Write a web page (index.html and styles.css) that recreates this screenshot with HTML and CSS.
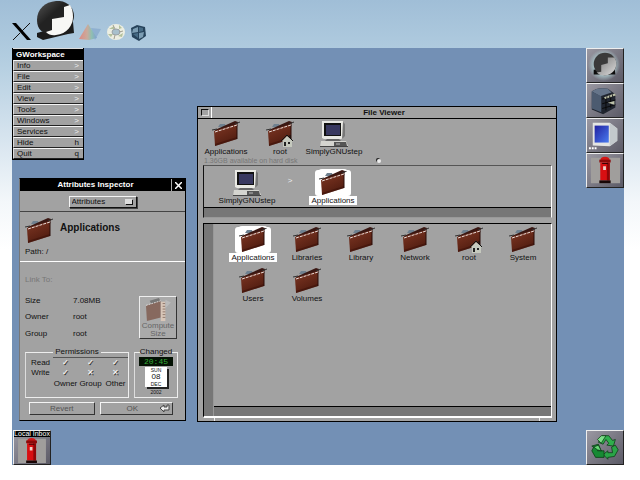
FILE: index.html
```
<!DOCTYPE html>
<html lang="en">
<head>
<meta charset="utf-8">
<title>GWorkspace</title>
<link rel="stylesheet" href="styles.css">
</head>
<body>
<svg class="defs" aria-hidden="true">
  <defs>
    <linearGradient id="leather" x1="0" y1="0" x2="0.5" y2="1"><stop offset="0" stop-color="#7d3c2a"/><stop offset=".5" stop-color="#692a1a"/><stop offset="1" stop-color="#4f1c10"/></linearGradient>
    <linearGradient id="ink" x1="0" y1="0" x2="1" y2="1"><stop offset="0" stop-color="#555"/><stop offset=".4" stop-color="#222"/><stop offset="1" stop-color="#222"/></linearGradient>
    <linearGradient id="glass" x1="0" y1="0" x2="1" y2="1"><stop offset="0" stop-color="#2020a0"/><stop offset="1" stop-color="#4a7cf0"/></linearGradient>
    <linearGradient id="silver" x1="0" y1="0" x2="1" y2="1"><stop offset="0" stop-color="#777"/><stop offset="1" stop-color="#ddd"/></linearGradient>
    <radialGradient id="glow"><stop offset=".6" stop-color="#a9c4c8"/><stop offset="1" stop-color="#a9c4c8" stop-opacity="0"/></radialGradient>
    <linearGradient id="prism" x1="0" y1="0" x2="1" y2="0"><stop offset="0" stop-color="#dc8a84"/><stop offset=".45" stop-color="#cbaa9b"/><stop offset=".7" stop-color="#8fbfb2"/><stop offset="1" stop-color="#7e9fd0"/></linearGradient>
  </defs>
  <symbol id="folder" viewBox="0 0 28 26">
    <path d="M6 6l2-3 5 0 1 3z" fill="#6f8190"/>
    <path d="M3 9L14 4l9-4 3 1-1 5L4 12z" fill="#3a1712"/>
    <path d="M2 10L25 3l0 15L3 25z" fill="url(#leather)"/>
    <path d="M3 25l22-7v-2L3 23z" fill="#3d120a" opacity=".6"/>
    <path d="M25 4v14" stroke="#2b0c08" fill="none"/>
    <path d="M0 9l5-1M23 3l5-2" stroke="#333"/>
    <path d="M3 11L25 4" stroke="#e9dcd8" stroke-dasharray="3 1" fill="none"/>
  </symbol>
  <symbol id="home" viewBox="0 0 28 26">
    <use href="#folder"/>
    <path d="M16 20l5-5 6 5-1 1v5h-9v-5z" fill="#c5c9be"/>
    <path d="M15 20l6-6 6 6M24 14v3" stroke="#111" fill="none"/>
    <path d="M18 21h2v4h-2zM22 21h2v2h-2z" fill="#222"/>
  </symbol>
  <symbol id="computer" viewBox="0 0 28 26">
    <path d="M2 0h21v17l-2 1H4l-2-1z" fill="#e9e9e4"/>
    <path d="M23 1l2 2v12l-3 3z" fill="#777"/>
    <path d="M4 2h17v13H4z" fill="#111"/><path d="M6 4h14v10H6z" fill="#393960"/>
    <path d="M7 18h12l2 2H5z" fill="#666"/>
    <path d="M1 20h25l2 5v1H0z" fill="#d5d5d0"/>
    <path d="M14 21h12l1 4H14z" fill="#555"/><path d="M16 23h4" stroke="#bbb"/>
    <path d="M0 25.500h28" stroke="#444"/>
  </symbol>
  <symbol id="postbox" viewBox="0 0 38 35">
    <path d="M4 4h31v27H4z" fill="#a09e9c"/>
    <path d="M14 7q0-4 5-4t5 4z" fill="#d31616"/>
    <path d="M13 6h12v3H13z" fill="#8b0909"/>
    <path d="M14 9h10v19H14z" fill="#d80f12"/><path d="M21 9h3v19h-3z" fill="#900608"/>
    <path d="M13 28h12v3H13z" fill="#180606"/>
    <path d="M16 10h6" stroke="#200"/><path d="M17 13h3v4h-3z" fill="#f0d0c8"/>
  </symbol>
</svg>

<header class="topbar">
  <svg class="x-logo" viewBox="0 0 20 18" role="img" aria-label="X"><path d="M0 0h4l15 17h-4z"/><path d="M18 0L10 8M8 10L1 17" stroke="#111" fill="none"/></svg>
  <svg class="step-logo" viewBox="0 0 38 40" role="img" aria-label="GNUstep">
    <path d="M0 32l7-2 29-9 1 11-6 1L6 39l-6-3z" fill="#1b1b1b"/>
    <path d="M0 19C0 8 8 1 19 0s18 7 18 15-9 20-20 19S0 29 0 19z" fill="url(#ink)"/>
    <path d="M33 4l-6 2v10l-12 2v11l-6 2q4 4 10 3c11-1 17-10 17-18 0-5-1-9-3-12z" fill="#f7f7f5"/>
  </svg>
  <svg class="app-a" viewBox="0 0 22 18" aria-hidden="true"><path d="M12 5l10 1-6 11z" fill="#8fb0d0"/><path d="M9 1l9 14-8 2-10-1z" fill="url(#prism)"/></svg>
  <svg class="app-b" viewBox="0 0 20 18" aria-hidden="true"><ellipse cx="10" cy="9" rx="9" ry="8" fill="#eceee2"/><path d="M3 6l5-3v3zM13 2l3 3-3 1zM2 11l5 0-2 3zM12 13l5-3-1 4z" fill="#b3c19c"/><ellipse cx="10" cy="9" rx="4" ry="3" fill="#a8c0cc" stroke="#9aa2a5"/><path d="M7 2l2 4M17 8l-4 1M8 16l1-4" stroke="#a09e90"/></svg>
  <svg class="app-c" viewBox="0 0 16 16" aria-hidden="true"><path d="M1 3l6-3 8 2 1 9-7 5-7-4z" fill="#27435b"/><path d="M3 4l5-2v5l-6 1zM9 8l5-1-1 5-4 2z" fill="#7c9db3"/><path d="M9 2l4 1v3l-4 1zM3 9l5-1v5z" fill="#476b85"/></svg>
</header>

<main class="desktop">
  <nav class="menu">
    <h1 class="menu-title">GWorkspace</h1>
    <button class="menu-item">Info<span class="key">&gt;</span></button>
    <button class="menu-item">File<span class="key">&gt;</span></button>
    <button class="menu-item">Edit<span class="key">&gt;</span></button>
    <button class="menu-item">View<span class="key">&gt;</span></button>
    <button class="menu-item">Tools<span class="key">&gt;</span></button>
    <button class="menu-item">Windows<span class="key">&gt;</span></button>
    <button class="menu-item">Services<span class="key">&gt;</span></button>
    <button class="menu-item">Hide<span class="key dark">h</span></button>
    <button class="menu-item">Quit<span class="key dark">q</span></button>
  </nav>

  <section class="inspector" aria-label="Attributes Inspector">
    <header class="inspector-title"><h2>Attributes Inspector</h2><button class="close" aria-label="Close"><svg viewBox="0 0 7 7"><path d="M0 0l7 7M7 0L0 7" stroke="#fff" stroke-width="1.500"/></svg></button></header>
    <div class="chooser">
      <select aria-label="Inspector"><option>Attributes</option></select>
      <i class="chooser-mark"></i>
    </div>
    <div class="subject">
      <svg class="icon"><use href="#folder"/></svg>
      <h3>Applications</h3>
      <p>Path: /</p>
    </div>
    <div class="details">
      <p class="faint">Link To:</p>
      <div class="facts-row">
        <dl class="facts">
          <dt>Size</dt><dd>7.08MB</dd>
          <dt>Owner</dt><dd>root</dd>
          <dt>Group</dt><dd>root</dd>
        </dl>
        <button class="compute"><svg viewBox="0 0 30 26" aria-hidden="true"><path d="M6 3l10-3 2 4-10 3z" fill="#777"/><path d="M2 8l16-5v18L3 25z" fill="#87695f"/><path d="M2 8l16-5" stroke="#ddd" stroke-dasharray="2 1"/><path d="M18 4h5v21h-5z" fill="#d8c6b8"/><path d="M20 6h3M20 9h3M20 12h3M20 15h3M20 18h3M20 21h3" stroke="#8b7468"/><path d="M23 2l6 3-6 6z" fill="#bbb"/></svg><span>Compute</span><span>Size</span></button>
      </div>
      <div class="groups">
        <fieldset class="permissions">
          <legend>Permissions</legend>
          <table>
            <tbody>
              <tr><th scope="row">Read</th><td><input type="checkbox" checked aria-label="Owner read"></td><td><input type="checkbox" checked aria-label="Group read"></td><td><input type="checkbox" checked aria-label="Other read"></td></tr>
              <tr><th scope="row">Write</th><td><input type="checkbox" checked aria-label="Owner write"></td><td><input type="checkbox" aria-label="Group write"></td><td><input type="checkbox" aria-label="Other write"></td></tr>
            </tbody>
            <tfoot><tr><td></td><th>Owner</th><th>Group</th><th>Other</th></tr></tfoot>
          </table>
        </fieldset>
        <fieldset class="changed">
          <legend>Changed</legend>
          <div class="clock">20:45</div>
          <div class="calendar"><span>SUN</span><b>08</b><span>DEC</span></div>
          <div class="year">2002</div>
        </fieldset>
      </div>
      <div class="actions">
        <button class="push">Revert</button>
        <button class="push ok">OK<svg viewBox="0 0 10 8" aria-hidden="true"><path d="M0 4l4-3v2h3V1h2v5H4v2z" fill="#eee" stroke="#444"/></svg></button>
      </div>
    </div>
  </section>

  <section class="viewer" aria-label="File Viewer">
    <header class="viewer-title"><button class="mini" aria-label="Miniaturize"></button><h2>File Viewer</h2></header>
    <div class="shelf">
      <a class="file" href="#"><svg class="icon"><use href="#folder"/></svg><span>Applications</span></a>
      <a class="file" href="#"><svg class="icon"><use href="#home"/></svg><span>root</span></a>
      <a class="file" href="#"><svg class="icon"><use href="#computer"/></svg><span>SimplyGNUstep</span></a>
    </div>
    <div class="status"><span>1.36GB available on hard disk</span><i class="knob"></i></div>
    <div class="path">
      <div class="path-files">
        <a class="file" href="#"><svg class="icon"><use href="#computer"/></svg><span>SimplyGNUstep</span></a>
        <i class="arrow">&gt;</i>
        <a class="file selected" href="#"><svg class="icon"><use href="#folder"/></svg><span>Applications</span></a>
      </div>
      <div class="scroll-row"></div>
    </div>
    <div class="browser">
      <div class="scroll-column"></div>
      <div class="files">
        <a class="file selected" href="#"><svg class="icon"><use href="#folder"/></svg><span>Applications</span></a>
        <a class="file" href="#"><svg class="icon"><use href="#folder"/></svg><span>Libraries</span></a>
        <a class="file" href="#"><svg class="icon"><use href="#folder"/></svg><span>Library</span></a>
        <a class="file" href="#"><svg class="icon"><use href="#folder"/></svg><span>Network</span></a>
        <a class="file" href="#"><svg class="icon"><use href="#home"/></svg><span>root</span></a>
        <a class="file" href="#"><svg class="icon"><use href="#folder"/></svg><span>System</span></a>
        <a class="file" href="#"><svg class="icon"><use href="#folder"/></svg><span>Users</span></a>
        <a class="file" href="#"><svg class="icon"><use href="#folder"/></svg><span>Volumes</span></a>
      </div>
      <div class="scroll-row"></div>
    </div>
    <div class="resize"></div>
  </section>

  <aside class="dock">
    <button class="tile" aria-label="GNUstep"><svg viewBox="0 0 38 35"><circle cx="18" cy="17" r="17" fill="url(#glow)"/><path d="M7 22l22-3 1 8H7z" fill="#0c0c0c"/><circle cx="19" cy="16" r="12" fill="#3a3a3a"/><path d="M29 9l-7 0v6l-7 2v7l-5 1q4 4 10 3c7-1 11-7 11-12q0-4-2-7z" fill="url(#silver)"/></svg></button>
    <button class="tile" aria-label="Workspace"><svg viewBox="0 0 38 35"><path d="M5 8q6-5 17-3l8 6v14l-13 7-12-5z" fill="#20252f"/><path d="M5 8q6-5 17-3l4 4-12 4z" fill="#66758a"/><path d="M5 8l10 5v17l-10-4z" fill="#4c5b70"/><path d="M16 16l14-4M16 21l14-4M16 26l14-4M20 14v14M25 12v13" stroke="#080808"/><path d="M18 14l11-4 2 2-12 4zM22 20l7-2v4z" fill="#bdc1a8"/><path d="M21 13v3M24 12v3M27 11v3" stroke="#222"/></svg></button>
    <button class="tile" aria-label="Terminal"><svg viewBox="0 0 38 35"><path d="M6 4l18 0 8 6v13l-8 6-18-1z" fill="#e4e5e3"/><path d="M24 4l8 6v13l-8 6z" fill="#c3c9cc"/><path d="M8 7h15v18H8z" fill="url(#glass)"/><path d="M2 31h2M5 31h2M8 31h2" stroke="#fff" stroke-width="2"/></svg></button>
    <button class="tile" aria-label="Mail"><svg viewBox="0 0 38 35"><use href="#postbox"/></svg></button>
    <button class="tile recycler" aria-label="Recycler"><svg viewBox="0 0 38 35"><g stroke="#0a3a14" stroke-width=".8"><path d="M12 12l4-7 7 0 4 5 3-1-2 7-7-1 2-2-3-4-3 5z" fill="#2fae4c"/><path d="M11 9l4-4 5 0-5 8z" fill="#7ddd88"/><path d="M26 17l4-2 3 5-4 7-7 1v2l-5-5 5-4v2l5 0z" fill="#2aa447"/><path d="M18 21v7H9l-4-7 2-4-2-1 7-2 3 7-3-1-1 1z" fill="#178a34"/><path d="M7 17l5-2 3 6-4-1z" fill="#68d878"/></g></svg></button>
  </aside>

  <button class="tile inbox"><span>Local Inbox</span><svg viewBox="4 2 31 30" aria-hidden="true"><use href="#postbox" width="38" height="35"/></svg></button>
</main>
</body>
</html>
```
FILE: styles.css
```
* { box-sizing: border-box; }

body {
  margin: 0;
  min-height: 100vh;
  display: flex;
  flex-direction: column;
  padding: 0 16px 15px 12px;
  background: linear-gradient(#a0bed7, #b2cde0 12%, #d5e3ee 28%, #f3f7fa 42%, #fff 52%);
  font: 8px/10px "Liberation Sans", Arial, sans-serif;
  color: #111;
}

h1, h2, h3, p, dl, dd { margin: 0; font-size: 8px; }
p { line-height: 10px; }
svg { display: block; }
button, select, input { font: inherit; color: inherit; padding: 0; margin: 0; border: 0; border-radius: 0; }
.defs { position: absolute; width: 0; height: 0; }

.topbar { height: 48px; display: flex; align-items: flex-end; padding-bottom: 7px; }
.x-logo { width: 20px; height: 18px; }
.step-logo { width: 38px; height: 40px; margin: 0 4px 0 5px; }
.app-a { width: 22px; height: 18px; margin-right: 5px; }
.app-b { width: 20px; height: 18px; margin-right: 4px; }
.app-c { width: 16px; height: 16px; }

.desktop { position: relative; flex: 1; min-height: 417px; background: #7390b5; }

.menu { position: absolute; left: 0; top: 0; width: 72px; border: 1px solid #000; border-width: 0 1px 1px; }
.menu-title { height: 12px; padding-left: 3px; background: #000; color: #fff; line-height: 12px; border-top: 1px solid #ddd; }
.menu-item {
  display: flex;
  justify-content: space-between;
  width: 100%;
  height: 11px;
  padding: 0 4px 0 3px;
  background: #a2a2a2;
  border-top: 1px solid #f4f4f4;
  border-left: 1px solid #ddd;
  border-bottom: 1px solid #222;
  line-height: 9px;
}
.key { color: #eee; }
.key.dark { color: #111; }

.inspector { position: absolute; left: 7px; top: 130px; width: 167px; background: #a2a2a2; border: 1px solid #000; border-left-color: #777; }
.inspector-title { display: flex; height: 12px; background: #000; color: #fff; text-align: center; line-height: 12px; }
.inspector-title h2 { flex: 1; }
.close { width: 14px; background: #000; border-left: 1px solid #aaa; display: grid; place-items: center; }
.close svg { width: 7px; height: 7px; }
.chooser { position: relative; height: 21px; padding-top: 5px; border-bottom: 1px solid #444; text-align: center; }
.chooser select { appearance: none; display: block; width: 68px; height: 12px; margin: 0 auto; padding-left: 2px; background: #a2a2a2; border: 1px solid; border-color: #f4f4f4 #111 #111 #f4f4f4; box-shadow: 1px 1px #444; }
.chooser-mark { position: absolute; left: 105px; top: 8px; width: 7px; height: 5px; background: #ddd; box-shadow: 1px 1px #111; }
.subject { display: grid; grid-template-columns: 28px 1fr; gap: 3px 7px; padding: 6px 5px 4px; border-bottom: 1px solid #fff; }
.subject h3 { font-size: 10px; line-height: 20px; }
.subject p { grid-column: 1 / -1; }
.icon { width: 28px; height: 26px; }
.details { padding: 13px 5px 5px; }
.faint { color: #777; }
.facts-row { display: flex; justify-content: space-between; padding-right: 3px; margin-top: 11px; }
.facts { display: grid; grid-template-columns: 48px 1fr; row-gap: 6px; }
.compute { width: 38px; height: 43px; background: #aaa; border: 1px solid; border-color: #eee #333 #333 #eee; color: #666; line-height: 8px; }
.compute svg { width: 30px; height: 24px; margin: 0 auto; }
.compute span { display: block; height: 8px; }
.groups { display: flex; gap: 5px; padding-right: 2px; margin-top: 8px; }
fieldset { margin: 0; padding: 0; min-width: 0; border: 1px solid #eee; border-left-color: #ddd; height: 51px; }
legend { margin: 0 auto; padding: 0 2px; height: 10px; }
.permissions { flex: 1; }
.permissions table { width: 100px; margin-left: 2px; border-collapse: collapse; table-layout: fixed; text-align: center; }
.permissions th, .permissions td { padding: 0; font-weight: normal; height: 10px; line-height: 9px; }
.permissions tfoot th { height: 12px; line-height: 12px; }
.permissions tbody tr:first-child td { border-top: 1px solid #555; }
input[type="checkbox"] { appearance: none; display: block; width: 8px; height: 8px; margin: 0 auto; color: #fff; text-shadow: 1px 1px #222; line-height: 8px; }
input[type="checkbox"]::before { content: "✕"; }
input[type="checkbox"]:checked::before { content: "✓"; }
.changed { width: 44px; text-align: center; }
.changed legend { padding: 0; }
.clock { width: 34px; height: 9px; margin: 0 auto 1px; background: #041204; color: #35a835; font: 8px/9px "Liberation Mono", monospace; }
.calendar { display: grid; grid-template-rows: 6px 8px 6px; width: 22px; height: 20px; margin: 0 auto; background: #fff; box-shadow: 2px 2px #222; font-size: 5px; line-height: 6px; }
.calendar b { font-size: 8px; line-height: 8px; font-weight: normal; }
.year { font-size: 5px; line-height: 7px; padding-top: 2px; }
.actions { display: flex; gap: 5px; padding: 0 7px 0 4px; margin-top: 4px; }
.push { flex: 1; height: 13px; background: #a2a2a2; border: 1px solid; border-color: #f4f4f4 #333 #333 #f4f4f4; color: #555; position: relative; line-height: 10px; }
.ok { padding-right: 8px; }
.push svg { position: absolute; right: 2px; top: 1px; width: 10px; height: 8px; }

.viewer { position: absolute; left: 185px; top: 58px; width: 360px; background: #a2a2a2; border: 1px solid #000; }
.viewer-title { display: flex; height: 12px; border-bottom: 1px solid #000; text-align: center; line-height: 11px; }
.viewer-title h2 { flex: 1; }
.mini { width: 14px; background: #a2a2a2; border-right: 1px solid #fff; display: grid; place-items: center; }
.mini::before { content: ""; width: 6px; height: 5px; border: 1px solid; border-color: #111 #ddd #ddd #111; }
.file { display: flex; flex-direction: column; align-items: center; width: 54px; color: #111; text-decoration: none; white-space: nowrap; }
.file span { line-height: 9px; padding: 0 2px; }
.selected .icon { background: #fff; border-radius: 3px; box-shadow: 0 0 0 1px #fff, -4px 0 #fff, 4px 0 #fff; }
.selected span { background: #fff; }
.shelf { display: flex; padding: 2px 0 0 1px; height: 38px; }
.shelf .file { height: 36px; }
.status { position: relative; height: 8px; padding-left: 6px; color: #777; font-size: 7px; line-height: 8px; }
.knob { position: absolute; left: 50%; top: 2px; width: 4px; height: 4px; border-radius: 50%; background: #eee; box-shadow: -1px -1px #222; }
.path { margin: 0 4px 5px 5px; border: 1px solid; border-color: #555 #fff #999 #111; }
.path-files { display: flex; padding: 4px 0 0 16px; height: 41px; }
.arrow { width: 32px; text-align: center; font-style: normal; color: #eee; padding-top: 6px; }
.scroll-row { height: 10px; border-top: 1px solid #000; background: #777; }
.browser { display: grid; grid-template: 182px auto / 10px 1fr; margin: 0 4px 0 5px; border: 1px solid; border-color: #000 #fff #fff #000; border-bottom-width: 2px; }
.scroll-column { grid-row: 1 / 3; background: #777; border-right: 1px solid #999; }
.files { display: grid; grid-template-columns: repeat(auto-fill, 54px); grid-auto-rows: 41px; padding: 3px 0 0 12px; align-content: start; }
.files .file { height: 37px; }
.resize { height: 3px; margin: 0 16px; border: 1px solid #eee; border-width: 0 1px; }

.dock { position: absolute; right: 0; top: 0; bottom: 0; display: flex; flex-direction: column; }
.tile { width: 38px; height: 35px; overflow: hidden; background: linear-gradient(135deg, #9a98a2, #5b5a66); border: 1px solid; border-color: #eee #222 #222 #eee; }
.tile svg { width: 100%; height: 100%; }
.recycler { margin-top: auto; }
.inbox { position: absolute; left: 1px; bottom: 0; display: flex; flex-direction: column; }
.inbox span { width: 100%; background: #000; color: #fff; font-size: 7px; line-height: 6px; white-space: nowrap; }
.inbox svg { flex: 1; min-height: 0; }
```
